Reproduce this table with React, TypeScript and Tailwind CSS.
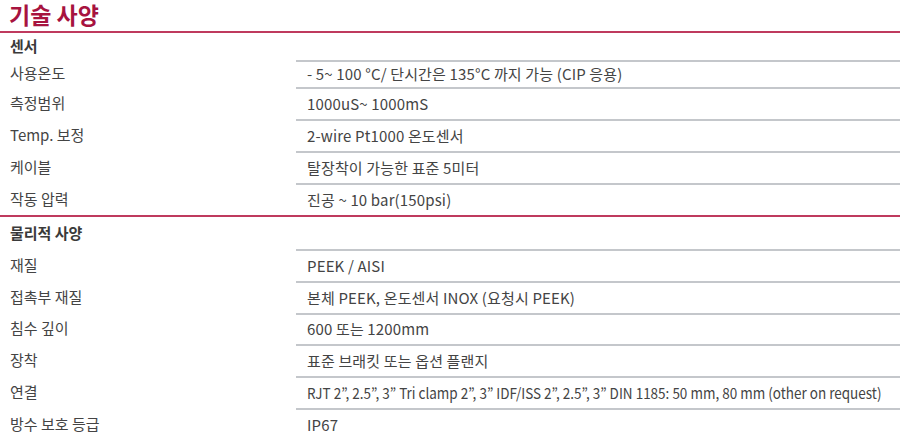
import React from "react";

type Row = { label: string; value: string; h: string; condensed?: boolean };

const sensor: Row[] = [
  { label: "사용온도", value: "- 5~ 100 °C/ 단시간은 135°C 까지 가능 (CIP 응용)", h: "h-[27px]" },
  { label: "측정범위", value: "1000uS~ 1000mS", h: "h-[32px]" },
  { label: "Temp. 보정", value: "2-wire Pt1000 온도센서", h: "h-[32px]" },
  { label: "케이블", value: "탈장착이 가능한 표준 5미터", h: "h-[32px]" },
  { label: "작동 압력", value: "진공 ~ 10 bar(150psi)", h: "h-[32px]" },
];

const physical: Row[] = [
  { label: "재질", value: "PEEK / AISI", h: "h-[32px]" },
  { label: "접촉부 재질", value: "본체 PEEK, 온도센서 INOX (요청시 PEEK)", h: "h-[32px]" },
  { label: "침수 깊이", value: "600 또는 1200mm", h: "h-[31px]" },
  { label: "장착", value: "표준 브래킷 또는 옵션 플랜지", h: "h-[32px]" },
  {
    label: "연결",
    value: "RJT 2”, 2.5”, 3” Tri clamp 2”, 3” IDF/ISS 2”, 2.5”, 3” DIN 1185: 50 mm, 80 mm (other on request)",
    h: "h-[32px]",
    condensed: true,
  },
  { label: "방수 보호 등급", value: "IP67", h: "h-[32px]" },
];

const Section = ({ title, rows, headH }: { title: string; rows: Row[]; headH: string }) => {
  return (
    <div className="border-b-2 border-[#bf3a5e]">
      <div className={`flex items-center pl-[10px] ${headH} text-[15px] font-bold text-[#3a3a3a]`}>
        {title}
      </div>
      {rows.map((r) => (
        <div key={r.label} className={`flex ${r.h}`}>
          <div className="w-[296px] shrink-0 flex items-center pl-[10px] text-[15px] text-[#444]">
            {r.label}
          </div>
          <div className="flex-1 flex items-center border-t-2 border-[#c4c7cb] pl-[11px] text-[15px] text-[#444] tracking-[0.01em] whitespace-nowrap overflow-hidden">
            {r.condensed ? (
              <span className="inline-block origin-left scale-x-[0.9] tracking-normal">{r.value}</span>
            ) : (
              r.value
            )}
          </div>
        </div>
      ))}
    </div>
  );
}

export default function App() {
  return (
    <div
      className="w-[900px] h-[438px] bg-white"
      style={{ fontFamily: '"Noto Sans CJK KR", "Noto Sans", sans-serif' }}
    >
      <div className="h-[33px] border-b-2 border-[#bf3a5e] pl-[9px] flex items-start">
        <h1 className="text-[23px] font-bold leading-[29px] text-[#a7133f]">기술 사양</h1>
      </div>
      <Section title="센서" rows={sensor} headH="h-[27px]" />
      <Section title="물리적 사양" rows={physical} headH="h-[32px]" />
    </div>
  );
}
